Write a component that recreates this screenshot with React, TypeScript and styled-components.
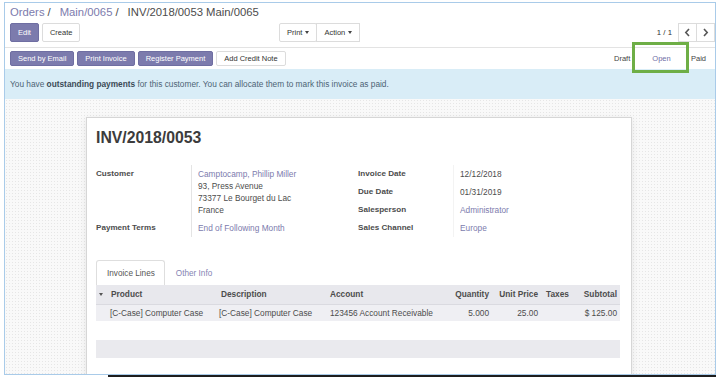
import React from 'react';
import styled, { createGlobalStyle } from 'styled-components';

const Global = createGlobalStyle`
  html, body { margin: 0; padding: 0; background: #fff; }
  body { font-family: "Liberation Sans", Arial, sans-serif; color: #4c4c4c; }
  * { box-sizing: border-box; }
`;

const PURPLE = '#7c7bad';

const Screen = styled.div`
  width: 720px;
  height: 380px;
  padding: 2px 0 0 4px;
  display: flex;
  flex-direction: column;
`;

const Window = styled.div`
  width: 712px;
  height: 373px;
  border: 1px solid #a9cbe9;
  display: flex;
  flex-direction: column;
  overflow: hidden;
  background: #fff;
`;

const TaskEdge = styled.div`
  margin-left: 104px;
  width: 608px;
  height: 2px;
  background: #1e1e1e;
`;

const ControlPanel = styled.div`
  padding: 0 0 5px 5px;
  border-bottom: 1px solid #e3e3e3;
  display: flex;
  flex-direction: column;
`;

const Breadcrumb = styled.div`
  height: 19px;
  line-height: 19px;
  font-size: 11.3px;
  display: flex;
  white-space: nowrap;
`;

const Crumb = styled.span<{ $active?: boolean }>`
  color: ${p => (p.$active ? '#4c4c4c' : PURPLE)};
`;

const Sep = styled.span`
  color: #4c4c4c;
  margin: 0 9px 0 3px;
`;

const ButtonsRow = styled.div`
  display: flex;
  align-items: center;
  height: 19px;
  margin-top: 1px;
`;

const Group = styled.div<{ $width?: number; $gap?: number }>`
  display: flex;
  gap: ${p => p.$gap ?? 0}px;
  ${p => (p.$width ? `width: ${p.$width}px;` : '')}
`;

const Btn = styled.button<{ $primary?: boolean; $h?: number; $joined?: boolean }>`
  height: ${p => p.$h ?? 19}px;
  padding: 0 7px;
  font-family: inherit;
  font-size: 7.5px;
  border-radius: 2px;
  border: 1px solid ${p => (p.$primary ? '#6f6ea2' : '#dcdcdc')};
  background: ${p => (p.$primary ? PURPLE : '#fff')};
  color: ${p => (p.$primary ? '#fff' : '#333')};
  display: inline-flex;
  align-items: center;
  gap: 3px;
  white-space: nowrap;
  ${p => (p.$joined ? 'border-radius: 0; margin-left: -1px;' : '')}
`;

const Caret = styled.span`
  display: inline-block;
  width: 0;
  height: 0;
  border-left: 2.5px solid transparent;
  border-right: 2.5px solid transparent;
  border-top: 3px solid #444;
`;

const Spacer = styled.div`
  flex: 1;
`;

const PagerValue = styled.span`
  font-size: 7.8px;
  color: #333;
  margin-right: 6px;
`;

const PagerBtn = styled.button`
  width: 19px;
  height: 19px;
  padding: 0;
  border: 1px solid #dcdcdc;
  background: #fff;
  display: inline-flex;
  align-items: center;
  justify-content: center;
  & + & { margin-left: -1px; }
`;

const StatusBar = styled.div`
  height: 21px;
  padding-left: 5px;
  display: flex;
  align-items: center;
`;

const States = styled.div`
  display: flex;
  align-self: stretch;
  align-items: center;
  font-size: 7.5px;
`;

const State = styled.div<{ $current?: boolean; $w: number; $pl?: number }>`
  position: relative;
  width: ${p => p.$w}px;
  align-self: stretch;
  display: flex;
  align-items: center;
  justify-content: ${p => (p.$pl !== undefined ? 'flex-start' : 'center')};
  padding-left: ${p => p.$pl ?? 0}px;
  color: ${p => (p.$current ? '#6f6ea6' : '#444')};
`;

const Highlight = styled.div`
  position: absolute;
  left: -4px;
  top: -6px;
  width: 57px;
  height: 31px;
  border: 3px solid #6eae46;
  pointer-events: none;
`;

const Alert = styled.div`
  height: 30px;
  padding-left: 5px;
  background: #d9edf7;
  display: flex;
  align-items: center;
  font-size: 8.3px;
  color: #4d6475;
  white-space: nowrap;
  b { color: #3b4a56; }
`;

const SheetBg = styled.div`
  flex: 1;
  padding: 18px 0 0 81px;
  background-color: #f9f9f9;
  background-image: radial-gradient(#e6e6e6 0.7px, transparent 0.8px);
  background-size: 3px 3px;
  overflow: hidden;
`;

const Sheet = styled.div`
  width: 546px;
  min-height: 300px;
  background: #fff;
  border: 1px solid #d6d6d6;
  box-shadow: 0 2px 8px rgba(0, 0, 0, 0.08);
  padding: 9px 9px 0 9px;
  font-size: 8.3px;
`;

const Title = styled.h1`
  margin: 0;
  font-size: 15.8px;
  line-height: 22px;
  font-weight: bold;
  color: #3c3c3c;
`;

const Fields = styled.div`
  margin-top: 16px;
  display: grid;
  grid-template-columns: 95px 167px 95px 1fr;
`;

const Col = styled.div`
  display: grid;
  grid-template-columns: 95px 1fr;
  align-content: start;
`;

const Label = styled.div`
  padding: 3px 0;
  line-height: 12px;
  font-weight: bold;
  font-size: 8.1px;
  color: #4c4c4c;
`;

const Value = styled.div<{ $link?: boolean; $faint?: boolean }>`
  padding: 3px 0 3px 6px;
  line-height: 12px;
  border-left: 1px solid ${p => (p.$faint ? '#f3f3f3' : '#e4e4e4')};
  color: ${p => (p.$link ? PURPLE : '#4c4c4c')};
`;

const LinkLine = styled.div`
  color: ${PURPLE};
`;

const Tabs = styled.div`
  margin-top: 23px;
  display: flex;
  height: 25px;
`;

const Tab = styled.div<{ $active?: boolean }>`
  padding: 0 ${p => (p.$active ? 9 : 13)}px 0 10px;
  display: flex;
  align-items: center;
  font-size: 8.2px;
  color: ${p => (p.$active ? '#555' : '#8584b3')};
  border: 1px solid ${p => (p.$active ? '#dedede' : 'transparent')};
  border-bottom: none;
  border-radius: 3px 3px 0 0;
`;

const Table = styled.table`
  width: 524px;
  border-collapse: collapse;
  table-layout: fixed;
  font-size: 8.3px;
`;

const Th = styled.th<{ $align?: string; $pl?: number; $pr?: number }>`
  height: 19px;
  padding: 0 ${p => p.$pr ?? 0}px 0 ${p => p.$pl ?? 0}px;
  background: #e8e8ed;
  text-align: ${p => p.$align ?? 'left'};
  font-weight: bold;
  color: #4c4c4c;
  border-bottom: 1px solid #dadae0;
  white-space: nowrap;
`;

const Td = styled.td<{ $align?: string; $pl?: number; $pr?: number }>`
  height: 17px;
  padding: 0 ${p => p.$pr ?? 0}px 0 ${p => p.$pl ?? 0}px;
  background: #efeff3;
  text-align: ${p => p.$align ?? 'left'};
  color: #4c4c4c;
  white-space: nowrap;
  overflow: hidden;
`;

const SortCaret = styled.span`
  display: inline-block;
  width: 0;
  height: 0;
  margin: 0 8px 1px 0;
  border-left: 2.5px solid transparent;
  border-right: 2.5px solid transparent;
  border-top: 3px solid #555;
  vertical-align: middle;
`;

const FooterBar = styled.div`
  margin-top: 19px;
  width: 524px;
  height: 18px;
  background: #eaeaee;
`;

const Chevron = ({ dir }: { dir: 'l' | 'r' }) => (
  <svg width="7" height="9" viewBox="0 0 7 9">
    <polyline
      points={dir === 'l' ? '5,1 1.8,4.5 5,8' : '2,1 5.2,4.5 2,8'}
      fill="none"
      stroke="#555"
      strokeWidth="1.6"
    />
  </svg>
);

export default function App() {
  return (
    <>
      <Global />
      <Screen>
        <Window>
          <ControlPanel>
            <Breadcrumb>
              <Crumb>Orders</Crumb>
              <Sep>/</Sep>
              <Crumb>Main/0065</Crumb>
              <Sep>/</Sep>
              <Crumb $active>INV/2018/0053 Main/0065</Crumb>
            </Breadcrumb>
            <ButtonsRow>
              <Group $width={269} $gap={3}>
                <Btn $primary>Edit</Btn>
                <Btn>Create</Btn>
              </Group>
              <Group>
                <Btn>
                  Print <Caret />
                </Btn>
                <Btn $joined>
                  Action <Caret />
                </Btn>
              </Group>
              <Spacer />
              <PagerValue>1 / 1</PagerValue>
              <PagerBtn>
                <Chevron dir="l" />
              </PagerBtn>
              <PagerBtn>
                <Chevron dir="r" />
              </PagerBtn>
            </ButtonsRow>
          </ControlPanel>
          <StatusBar>
            <Group $gap={3}>
              <Btn $primary $h={15}>Send by Email</Btn>
              <Btn $primary $h={15}>Print Invoice</Btn>
              <Btn $primary $h={15}>Register Payment</Btn>
              <Btn $h={15}>Add Credit Note</Btn>
            </Group>
            <Spacer />
            <States>
              <State $w={27} $pl={5}>Draft</State>
              <State $w={51} $current>
                Open
                <Highlight />
              </State>
              <State $w={28} $pl={4}>Paid</State>
            </States>
          </StatusBar>
          <Alert>
            <span>
              You have <b>outstanding payments</b> for this customer. You can allocate them to mark
              this invoice as paid.
            </span>
          </Alert>
          <SheetBg>
            <Sheet>
              <Title>INV/2018/0053</Title>
              <Fields>
                <Col style={{ gridColumn: '1 / span 2' }}>
                  <Label>Customer</Label>
                  <Value>
                    <LinkLine>Camptocamp, Phillip Miller</LinkLine>
                    <div>93, Press Avenue</div>
                    <div>73377 Le Bourget du Lac</div>
                    <div>France</div>
                  </Value>
                  <Label>Payment Terms</Label>
                  <Value $link>End of Following Month</Value>
                </Col>
                <Col style={{ gridColumn: '3 / span 2' }}>
                  <Label>Invoice Date</Label>
                  <Value $faint>12/12/2018</Value>
                  <Label>Due Date</Label>
                  <Value $faint>01/31/2019</Value>
                  <Label>Salesperson</Label>
                  <Value $faint $link>Administrator</Value>
                  <Label>Sales Channel</Label>
                  <Value $faint $link>Europe</Value>
                </Col>
              </Fields>
              <Tabs>
                <Tab $active>Invoice Lines</Tab>
                <Tab>Other Info</Tab>
              </Tabs>
              <Table>
                <colgroup>
                  <col style={{ width: 121 }} />
                  <col style={{ width: 109 }} />
                  <col style={{ width: 114 }} />
                  <col style={{ width: 52 }} />
                  <col style={{ width: 49 }} />
                  <col style={{ width: 34 }} />
                  <col style={{ width: 45 }} />
                </colgroup>
                <thead>
                  <tr>
                    <Th $pl={3}>
                      <SortCaret />
                      Product
                    </Th>
                    <Th $pl={4}>Description</Th>
                    <Th $pl={4}>Account</Th>
                    <Th $align="right" $pr={3}>Quantity</Th>
                    <Th $align="right" $pr={3}>Unit Price</Th>
                    <Th $pl={5}>Taxes</Th>
                    <Th $align="right" $pr={3}>Subtotal</Th>
                  </tr>
                </thead>
                <tbody>
                  <tr>
                    <Td $pl={14}>[C-Case] Computer Case</Td>
                    <Td $pl={2}>[C-Case] Computer Case</Td>
                    <Td $pl={4}>123456 Account Receivable</Td>
                    <Td $align="right" $pr={3}>5.000</Td>
                    <Td $align="right" $pr={3}>25.00</Td>
                    <Td $pl={5}></Td>
                    <Td $align="right" $pr={3}>$ 125.00</Td>
                  </tr>
                </tbody>
              </Table>
              <FooterBar />
            </Sheet>
          </SheetBg>
        </Window>
        <TaskEdge />
      </Screen>
    </>
  );
}
